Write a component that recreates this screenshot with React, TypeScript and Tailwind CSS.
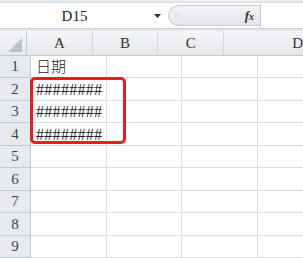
import React from 'react';

const rowHeights = [22, 23, 22, 23, 22, 23, 22, 23, 22];
const cols = [
  { name: 'A', w: 'w-[76px]' },
  { name: 'B', w: 'w-[75px]' },
  { name: 'C', w: 'w-[76px]' },
];

const cellText: Record<number, string> = {
  1: '日期',
  2: '########',
  3: '########',
  4: '########',
};

export default function App() {
  return (
    <div className="w-[303px] h-[258px] overflow-hidden bg-white font-['Liberation_Serif',serif] text-[#333]">
      {/* top strip */}
      <div className="h-[3px] bg-gradient-to-b from-[#f1f3f5] to-[#d5d9de]" />

      {/* formula bar */}
      <div className="h-[26px] flex bg-white border-b border-[#c9ced4]">
        <div className="w-[147px] flex items-center justify-center pl-[2px] pt-[2px] text-[15px] text-[#222]">
          D15
        </div>
        <div className="w-[21px] flex items-center justify-center">
          <svg width="7" height="4" viewBox="0 0 7 4">
            <path d="M0 0h7L3.5 4z" fill="#333" />
          </svg>
        </div>
        <div className="w-[92px] my-[2px] flex items-center rounded-l-full border border-r-0 border-[#c4c9cf] bg-gradient-to-b from-[#f3f4f6] to-[#e2e5e9]">
          <div className="ml-[6px] w-[6px] h-[6px] rounded-full border border-[#d4d8dc] bg-[#eceef0]" />
          <div className="flex-1" />
          <span className="mr-[6px] text-[13px] italic font-bold text-[#333]">
            f<span className="text-[10px]">x</span>
          </span>
        </div>
        <div className="flex-1 my-[1px] bg-white border-l border-[#c4c9cf]" />
      </div>

      <div className="h-[2px] bg-[#e3e6ea]" />

      {/* grid */}
      <div className="relative">
        <div className="flex h-[25px] bg-gradient-to-b from-[#f4f5f7] to-[#e4e7eb] border-b border-[#c3c8ce]">
          <div className="w-[31px] relative border-r border-[#c3c8ce]">
            <svg className="absolute right-[4px] bottom-[3px]" width="14" height="14" viewBox="0 0 14 14">
              <path d="M14 0V14H0z" fill="#bcc1c7" />
            </svg>
          </div>
          {cols.map((c) => (
            <div
              key={c.name}
              className={`${c.w} flex items-center justify-center text-[15px] border-r border-[#d2d6db]`}
            >
              {c.name}
            </div>
          ))}
          <div className="flex-1 flex items-center justify-center pl-[68px] text-[15px]">D</div>
        </div>

        {rowHeights.map((h, i) => {
          const r = i + 1;
          const text = cellText[r];
          return (
            <div key={r} className="flex" style={{ height: h }}>
              <div className="w-[31px] flex items-center justify-center bg-[#e6e9ed] border-r border-b border-[#c3c8ce] text-[15px] text-[#444]">
                {r}
              </div>
              <div className="w-[76px] flex items-end pl-[5px] pb-[1px] border-r border-b border-[#dadcde] whitespace-nowrap overflow-visible">
                {text === '日期' ? (
                  <span className="font-['Noto_Sans_CJK_SC',sans-serif] font-light text-[15px] leading-[20px] text-[#222]">
                    {text}
                  </span>
                ) : text ? (
                  <span className="text-[16px] leading-[19px] tracking-[0.3px] text-[#222]">{text}</span>
                ) : null}
              </div>
              <div className="w-[75px] border-r border-b border-[#dadcde]" />
              <div className="w-[76px] border-r border-b border-[#dadcde]" />
              <div className="flex-1 border-b border-[#dadcde]" />
            </div>
          );
        })}

        {/* red highlight */}
        <div className="absolute left-[30px] top-[46px] w-[96px] h-[67px] border-[3px] border-[#ec1b1f] rounded-[5px]" />
      </div>
    </div>
  );
}
